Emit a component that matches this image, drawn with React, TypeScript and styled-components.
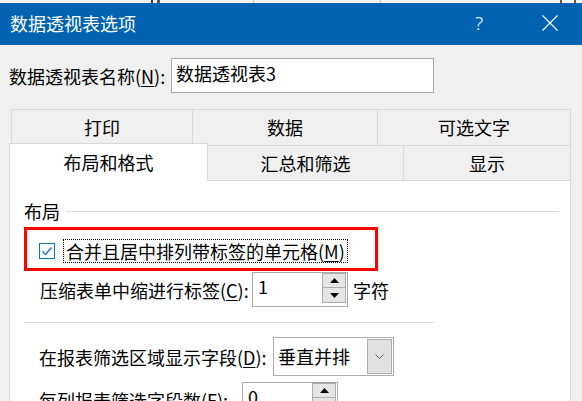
import React from 'react';
import styled, { createGlobalStyle } from 'styled-components';

const GlobalStyle = createGlobalStyle`
  html, body {
    margin: 0;
    padding: 0;
    background: #f0f0f0;
  }
  * {
    box-sizing: border-box;
  }
`;

const font = `"Noto Sans CJK SC", "Noto Sans", sans-serif`;

const Dialog = styled.div`
  width: 582px;
  height: 401px;
  overflow: hidden;
  background: #f0f0f0;
  font-family: ${font};
  font-size: 18px;
  line-height: 22px;
  color: #000;
`;

const TopStrip = styled.div`
  height: 3px;
  background-color: #f4f4f4;
  background-image: linear-gradient(
      to right,
      transparent 151px,
      #3a3a3a 151px,
      #3a3a3a 153px,
      transparent 153px,
      transparent 157px,
      #5a5a5a 157px,
      #5a5a5a 160px,
      transparent 160px,
      transparent 253px,
      #c6c6c6 253px,
      #c6c6c6 254px,
      transparent 254px,
      transparent 380px,
      #c6c6c6 380px,
      #c6c6c6 381px,
      transparent 381px,
      transparent 560px,
      #8a4a3a 560px,
      #8a4a3a 562px,
      transparent 562px,
      transparent 574px,
      #8a4a3a 574px,
      #8a4a3a 576px,
      transparent 576px
    );
`;

const TitleBar = styled.div`
  height: 42px;
  background: #0063b1;
  color: #fff;
  display: flex;
  align-items: center;
  padding: 0 9px 0 10px;
`;

const Title = styled.div`
  flex: 1;
  font-size: 18px;
  padding-bottom: 2px;
`;

const HelpButton = styled.div`
  width: 20px;
  margin-right: 38px;
  text-align: center;
  font-family: "Noto Sans", sans-serif;
  font-weight: 300;
  font-size: 19px;
  padding-bottom: 2px;
`;

const CloseButton = styled.div`
  width: 46px;
  height: 42px;
  display: flex;
  align-items: center;
  justify-content: center;
  padding-bottom: 2px;
`;

const NameRow = styled.div`
  display: flex;
  align-items: center;
  height: 35px;
  margin-top: 13px;
  padding-left: 9px;
`;

const Label = styled.div<{ $w: number }>`
  flex: none;
  width: ${(p) => p.$w}px;
  white-space: nowrap;
`;

const U = styled.span`
  text-decoration: underline;
  text-underline-offset: 2px;
  text-decoration-thickness: 1px;
`;

const TextInput = styled.div`
  width: 263px;
  height: 35px;
  background: #fff;
  border: 1px solid #a9a9a9;
  padding: 3px 0 0 4px;
  white-space: nowrap;
`;

const Tabs = styled.div`
  margin: 16px 0 0 9px;
  width: 562px;
`;

const TabRow = styled.div<{ $top?: boolean }>`
  display: flex;
  align-items: flex-end;
  height: ${(p) => (p.$top ? 36 : 38)}px;
  margin-left: ${(p) => (p.$top ? 2 : 0)}px;
  margin-top: ${(p) => (p.$top ? 0 : -2)}px;
`;

const Tab = styled.div<{ $w: number; $active?: boolean; $back?: boolean; $last?: boolean }>`
  flex: none;
  width: ${(p) => p.$w}px;
  height: ${(p) => (p.$active ? 38 : 36)}px;
  display: flex;
  align-items: center;
  justify-content: center;
  background: ${(p) => (p.$active ? '#fff' : '#f0f0f0')};
  border-top: 1px solid #d9d9d9;
  border-left: ${(p) => (p.$active || p.$back ? '1px solid #d9d9d9' : 'none')};
  border-right: ${(p) => (!p.$back || p.$last ? '1px solid #d9d9d9' : 'none')};
  border-bottom: ${(p) => (p.$active || p.$back ? 'none' : '1px solid #d9d9d9')};
  padding-bottom: ${(p) => (p.$active ? 2 : 1)}px;
  white-space: nowrap;
`;

const Panel = styled.div`
  width: 562px;
  height: 240px;
  background: #fff;
  border-left: 1px solid #d9d9d9;
  border-right: 1px solid #d9d9d9;
  padding: 19px 0 0 14px;
`;

const GroupHeader = styled.div`
  display: flex;
  align-items: center;
  gap: 6px;
  height: 22px;
  padding-right: 11px;
`;

const Rule = styled.div<{ $w?: number }>`
  height: 1px;
  background: #dcdcdc;
  flex: ${(p) => (p.$w ? 'none' : 1)};
  width: ${(p) => (p.$w ? `${p.$w}px` : 'auto')};
`;

const Highlight = styled.div`
  width: 354px;
  height: 44px;
  margin-top: 5px;
  border: 3px solid #ff0000;
  display: flex;
  align-items: center;
  gap: 8px;
  padding: 3px 0 0 12px;
`;

const CheckBox = styled.div`
  flex: none;
  width: 16px;
  height: 16px;
  border: 1px solid #0078d7;
  background: #fff;
  display: flex;
  align-items: center;
  justify-content: center;
`;

const FocusText = styled.div`
  height: 24px;
  border: 1px dotted #000;
  padding: 0 2px;
  white-space: nowrap;
`;

const Row = styled.div<{ $mt: number; $pl: number; $h: number }>`
  display: flex;
  align-items: center;
  margin-top: ${(p) => p.$mt}px;
  padding-left: ${(p) => p.$pl}px;
  height: ${(p) => p.$h}px;
`;

const SpinBox = styled.div`
  flex: none;
  width: 96px;
  height: 35px;
  border: 1px solid #a9a9a9;
  background: #fff;
  display: flex;
  align-items: flex-start;
`;

const SpinValue = styled.div`
  flex: 1;
  padding: 2px 0 0 5px;
`;

const SpinButtons = styled.div`
  flex: none;
  width: 24px;
  margin-right: 1px;
  display: flex;
  flex-direction: column;
`;

const SpinButton = styled.div`
  height: 15px;
  background: #e5e5e5;
  border: 1px solid #adadad;
  display: flex;
  align-items: center;
  justify-content: center;
  & + & {
    border-top: none;
    height: 15px;
  }
`;

const Unit = styled.div`
  margin-left: 5px;
`;

const DropBox = styled.div`
  flex: none;
  width: 121px;
  height: 39px;
  border: 1px solid #adadad;
  background: #fff;
  display: flex;
  align-items: stretch;
`;

const DropValue = styled.div`
  flex: 1;
  display: flex;
  align-items: center;
  padding: 0 0 2px 4px;
`;

const DropArrow = styled.div`
  flex: none;
  width: 25px;
  margin: 1px 1px 1px 0;
  background: #e1e1e1;
  border: 1px solid #adadad;
  display: flex;
  align-items: center;
  justify-content: center;
`;

const UpTriangle = () => (
  <svg width="9" height="5" viewBox="0 0 9 5">
    <polygon points="0,5 4.5,0 9,5" fill="#000" />
  </svg>
);

const DownTriangle = () => (
  <svg width="9" height="5" viewBox="0 0 9 5">
    <polygon points="0,0 4.5,5 9,0" fill="#000" />
  </svg>
);

export default function App() {
  return (
    <>
      <GlobalStyle />
      <Dialog>
        <TopStrip />
        <TitleBar>
          <Title>数据透视表选项</Title>
          <HelpButton>?</HelpButton>
          <CloseButton>
            <svg width="16" height="16" viewBox="0 0 16 16">
              <path d="M0.5 0.5 L15.5 15.5 M15.5 0.5 L0.5 15.5" stroke="#fff" strokeWidth="1.2" fill="none" />
            </svg>
          </CloseButton>
        </TitleBar>

        <NameRow>
          <Label $w={162}>
            数据透视表名称(<U>N</U>):
          </Label>
          <TextInput>数据透视表3</TextInput>
        </NameRow>

        <Tabs>
          <TabRow $top>
            <Tab $w={181} $back>打印</Tab>
            <Tab $w={185} $back>数据</Tab>
            <Tab $w={194} $back $last>可选文字</Tab>
          </TabRow>
          <TabRow>
            <Tab $w={199} $active>布局和格式</Tab>
            <Tab $w={196}>汇总和筛选</Tab>
            <Tab $w={167}>显示</Tab>
          </TabRow>
          <Panel>
            <GroupHeader>
              <span>布局</span>
              <Rule />
            </GroupHeader>

            <Highlight>
              <CheckBox>
                <svg width="14" height="14" viewBox="0 0 14 14">
                  <path d="M2.5 7.5 L5.5 10.5 L11.5 3.5" stroke="#1a6fd0" strokeWidth="1.4" fill="none" />
                </svg>
              </CheckBox>
              <FocusText>
                合并且居中排列带标签的单元格(<U>M</U>)
              </FocusText>
            </Highlight>

            <Row $mt={1} $pl={16} $h={35}>
              <Label $w={212}>
                压缩表单中缩进行标签(<U>C</U>):
              </Label>
              <SpinBox>
                <SpinValue>1</SpinValue>
                <SpinButtons>
                  <SpinButton>
                    <UpTriangle />
                  </SpinButton>
                  <SpinButton>
                    <DownTriangle />
                  </SpinButton>
                </SpinButtons>
              </SpinBox>
              <Unit>字符</Unit>
            </Row>

            <Row $mt={15} $pl={0} $h={1}>
              <Rule $w={410} />
            </Row>

            <Row $mt={14} $pl={15} $h={39}>
              <Label $w={234}>
                在报表筛选区域显示字段(<U>D</U>):
              </Label>
              <DropBox>
                <DropValue>垂直并排</DropValue>
                <DropArrow>
                  <svg width="9" height="5" viewBox="0 0 9 5">
                    <path d="M0.5 0.5 L4.5 4.5 L8.5 0.5" stroke="#606060" strokeWidth="1" fill="none" />
                  </svg>
                </DropArrow>
              </DropBox>
            </Row>

            <Row $mt={6} $pl={15} $h={35}>
              <Label $w={203}>
                每列报表筛选字段数(<U>F</U>):
              </Label>
              <SpinBox>
                <SpinValue>0</SpinValue>
                <SpinButtons>
                  <SpinButton>
                    <UpTriangle />
                  </SpinButton>
                  <SpinButton>
                    <DownTriangle />
                  </SpinButton>
                </SpinButtons>
              </SpinBox>
            </Row>
          </Panel>
        </Tabs>
      </Dialog>
    </>
  );
}
